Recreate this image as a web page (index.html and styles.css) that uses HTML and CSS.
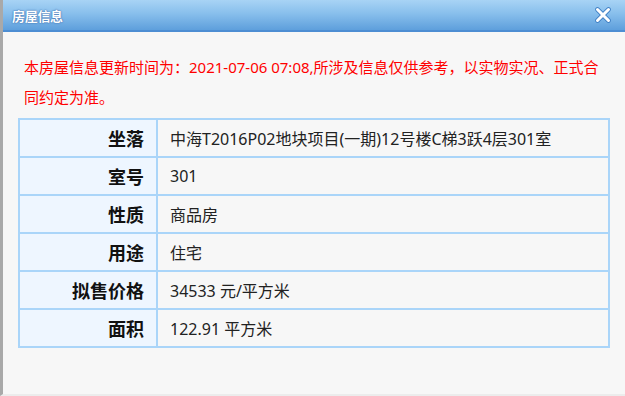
FILE: index.html
```html
<!DOCTYPE html>
<html lang="zh-CN">
<head>
  <meta charset="UTF-8">
  <meta name="viewport" content="width=device-width, initial-scale=1.0">
  <title>房屋信息</title>
  <link rel="stylesheet" href="styles.css">
</head>
<body>
  <div class="dialog">
    <div class="titlebar">
      <span class="title">房屋信息</span>
      <span class="close" title="关闭">
        <svg width="16" height="16" viewBox="0 0 16 16">
          <path d="M2.5 2.5 L13.5 13.5 M13.5 2.5 L2.5 13.5" stroke="#3f7fc4" stroke-width="4.6" stroke-linecap="round"/>
          <path d="M2.5 2.5 L13.5 13.5 M13.5 2.5 L2.5 13.5" stroke="#fff" stroke-width="3" stroke-linecap="round"/>
        </svg>
      </span>
    </div>
    <div class="content">
      <p class="notice">本房屋信息更新时间为：2021-07-06 07:08,所涉及信息仅供参考，以实物实况、正式合同约定为准。</p>
      <table class="info">
        <tr><th>坐落</th><td>中海T2016P02地块项目(一期)12号楼C梯3跃4层301室</td></tr>
        <tr><th>室号</th><td>301</td></tr>
        <tr><th>性质</th><td>商品房</td></tr>
        <tr><th>用途</th><td>住宅</td></tr>
        <tr><th>拟售价格</th><td>34533 元/平方米</td></tr>
        <tr><th>面积</th><td>122.91 平方米</td></tr>
      </table>
    </div>
  </div>
</body>
</html>
```

FILE: styles.css
```css
/* General Styles */
html, body {
  margin: 0;
  height: 100%;
}

body {
  font-family: "Noto Sans", "Noto Sans CJK SC", "Microsoft YaHei", sans-serif;
  background: #f7f7f7;
  color: #222;
}

.dialog {
  height: 100%;
  box-sizing: border-box;
  border-left: 3px solid #a9a9a9;
  border-bottom: 2px solid #ececec;
  background: #f7f7f7;
}

/* Title Bar */
.titlebar {
  height: 30px;
  display: flex;
  align-items: center;
  justify-content: space-between;
  padding: 0 14px 0 9px;
  background: linear-gradient(to bottom, #a8d3f5, #88bfec 45%, #5e9fdc);
  border-bottom: 2px solid #4d8ed3;
}

.title {
  color: #fff;
  font-size: 13px;
  font-weight: bold;
  letter-spacing: -0.3px;
  text-shadow: 0 0 2px #3d6fb0, 0 0 1px #3d6fb0;
}

.close {
  display: flex;
  cursor: pointer;
}

/* Content */
.content {
  padding: 20px 17px 0 15px;
}

.notice {
  margin: 0 0 6px;
  padding: 0 3px 0 6px;
  color: #f00;
  font-size: 15px;
  line-height: 30px;
}

.info {
  width: 592px;
  border-collapse: collapse;
}

.info th,
.info td {
  height: 36px;
  border: 2px solid #aad5f9;
  padding: 0 12px;
}

.info th {
  width: 112px;
  text-align: right;
  background: #eef6ff;
  color: #111;
  font-size: 18px;
  font-weight: bold;
}

.info td {
  text-align: left;
  color: #222;
  font-size: 16px;
}
```
